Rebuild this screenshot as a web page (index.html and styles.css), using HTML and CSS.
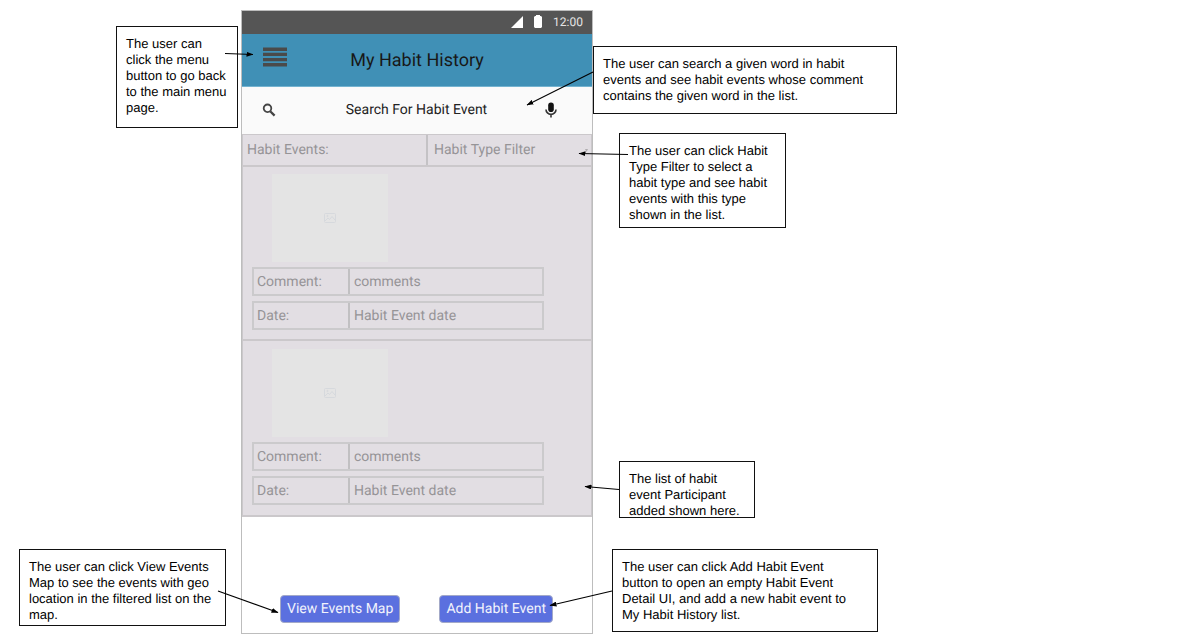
FILE: index.html
```html
<!DOCTYPE html>
<html lang="en">
<head>
<meta charset="utf-8">
<title>My Habit History</title>
<link rel="stylesheet" href="styles.css">
</head>
<body>
<main class="board">
  <section class="phone">
    <div class="status">
      <svg width="12" height="12" viewBox="0 0 12 12"><path d="M12 0v12H0z" fill="#fff"/></svg>
      <svg width="8" height="13" viewBox="0 0 8 13"><path d="M1 1h1V0h4v1h1l1 1v10l-1 1H1l-1-1V2z" fill="#fff"/></svg>
      <span>12:00</span>
    </div>
    <header class="appbar">
      <button class="menu" type="button" aria-label="Menu">
        <svg width="24" height="20" viewBox="0 0 24 20"><path d="M0 2.200h24M0 7.400h24M0 12.600h24M0 17.800h24" stroke="#4a4a4a" stroke-width="3.400"/></svg>
      </button>
      <h1>My Habit History</h1>
    </header>
    <div class="search">
      <svg width="14" height="14" viewBox="0 0 14 14" fill="none" stroke="#444" stroke-width="1.800"><circle cx="5.500" cy="5.300" r="3.800"/><path d="M8.200 8.200l4.400 4.400" stroke-width="2.300"/></svg>
      <input type="text" value="Search For Habit Event" aria-label="Search habit events">
      <button type="button" aria-label="Voice search">
        <svg width="12" height="16" viewBox="0 0 12 16"><rect x="3.200" y="0.500" width="5.600" height="9.500" rx="2.800" fill="#111"/><path d="M1 7.400a5 5 0 0 0 10 0M6 12.200V15.500" fill="none" stroke="#333" stroke-width="1.600"/></svg>
      </button>
    </div>
    <div class="list">
      <div class="filter">
        <label for="type">Habit Events:</label>
        <div class="picker">
          <select id="type"><option>Habit Type Filter</option></select>
          <svg width="3" height="3" viewBox="0 0 3 3"><path d="M0 0h3L1.500 3z" fill="#b0adb0"/></svg>
        </div>
      </div>
      <article class="event">
        <div class="photo"><svg width="12" height="10" viewBox="0 0 12 10" fill="none" stroke="#d6d9dd"><rect x=".5" y=".5" width="11" height="9" rx="1"/><path d="M1 8l3-3 1.500 1.500L8 3.500 11 7"/><circle cx="3.500" cy="3" r=".6"/></svg></div>
        <div class="field"><label for="c1">Comment:</label><input id="c1" type="text" value="comments"></div>
        <div class="field"><label for="d1">Date:</label><input id="d1" type="text" value="Habit Event date"></div>
      </article>
      <article class="event">
        <div class="photo"><svg width="12" height="10" viewBox="0 0 12 10" fill="none" stroke="#d6d9dd"><rect x=".5" y=".5" width="11" height="9" rx="1"/><path d="M1 8l3-3 1.500 1.500L8 3.500 11 7"/><circle cx="3.500" cy="3" r=".6"/></svg></div>
        <div class="field"><label for="c2">Comment:</label><input id="c2" type="text" value="comments"></div>
        <div class="field"><label for="d2">Date:</label><input id="d2" type="text" value="Habit Event date"></div>
      </article>
    </div>
    <footer class="actions">
      <button type="button">View Events Map</button>
      <button type="button">Add Habit Event</button>
    </footer>
  </section>

  <p class="note note-menu">The user can<br>click the menu<br>button to go back<br>to the main menu<br>page.</p>
  <p class="note note-search">The user can search a given word in habit<br>events and see habit events whose comment<br>contains the given word in the list.</p>
  <p class="note note-filter">The user can click Habit<br>Type Filter to select a<br>habit type and see habit<br>events with this type<br>shown in the list.</p>
  <p class="note note-list">The list of habit<br>event Participant<br>added shown here.</p>
  <p class="note note-map">The user can click View Events<br>Map to see the events with geo<br>location in the filtered list on the<br>map.</p>
  <p class="note note-add">The user can click Add Habit Event<br>button to open an empty Habit Event<br>Detail UI, and add a new habit event to<br>My Habit History list.</p>

  <svg class="arrows" width="900" height="640" viewBox="0 0 900 640" aria-hidden="true">
    <defs><marker id="tip" viewBox="0 0 7 5" refX="6.500" refY="2.500" markerWidth="7" markerHeight="5" markerUnits="userSpaceOnUse" orient="auto"><path d="M0 0L7 2.500 0 5z"/></marker></defs>
    <g stroke="#000" stroke-width="1.200" fill="none">
      <path d="M225 53.500L253 54.500" marker-end="url(#tip)"/>
      <path d="M593 72L527 105" marker-end="url(#tip)"/>
      <path d="M628 154.500L579 153.500" marker-end="url(#tip)"/>
      <path d="M619 489.500L585 486.500" marker-end="url(#tip)"/>
      <path d="M218 591L278 612.500" marker-end="url(#tip)"/>
      <path d="M612 591L550 605.500" marker-end="url(#tip)"/>
    </g>
  </svg>
</main>
</body>
</html>
```
FILE: styles.css
```css
* { box-sizing: border-box; }
body { margin: 0; background: #fff; font-family: Roboto, "Liberation Sans", sans-serif; text-rendering: geometricPrecision; }
button, input, select { font: inherit; color: inherit; background: none; border: 0; border-radius: 0; margin: 0; padding: 0; text-rendering: inherit; }
svg { display: block; }

.board { position: relative; padding: 10px 0 10px 241px; }
.phone { width: 352px; border: 1px solid #bdbdbd; background: #fff; }

.status { display: flex; align-items: center; justify-content: flex-end; gap: 11px; height: 23px; padding: 0 9px 2px 0; background: #555; color: #e4e4e4; font-size: 12px; }

.appbar { display: grid; grid-template-columns: 24px 1fr 24px; align-items: center; height: 53px; padding: 0 21px; background: #4090b6; border-bottom: 1px solid #74b3d0; }
.menu { align-self: start; margin-top: 13px; }
.appbar h1 { margin: 0; font-size: 18px; font-weight: 400; text-align: center; color: #181818; }

.search { display: flex; align-items: center; height: 47px; padding: 0 35px 1px 20px; background: #fafafa; color: #222; font-size: 14px; }
.search input { flex: 1; min-width: 0; padding-left: 12px; text-align: center; }

.list { border: 2px solid #cbc8cb; border-width: 1px 1px 2px; background: #e2dee3; color: #969497; font-size: 14px; }
.filter { display: grid; grid-template-columns: 185px 1fr; height: 32px; border-bottom: 2px solid #cbc8cb; }
.filter label { display: flex; align-items: center; padding-left: 4px; border-right: 2px solid #c4c2c5; }
.picker { display: flex; align-items: center; padding-right: 3px; }
.picker select { flex: 1; height: 100%; appearance: none; padding-left: 6px; }

.event { display: flex; flex-direction: column; gap: 5px; padding: 7px 47px 9px 9px; }
.event + .event { padding: 8px 47px 10px 9px; border-top: 2px solid #cbc8cb; }
.photo { display: grid; place-items: center; width: 116px; height: 88px; margin-left: 20px; background: #e4e4e4; }
.field { display: grid; grid-template-columns: 96px 1fr; height: 29px; border: 2px solid #cbcacc; }
.field label { display: flex; align-items: center; padding-left: 3px; border-right: 2px solid #c1c0c2; }
.field input { min-width: 0; padding-left: 4px; }

.actions { display: flex; justify-content: space-between; padding: 78px 39px 10px 38px; }
.actions button { height: 28px; padding: 0 6px; background: #5b70df; border: 1px solid #a3a9c8; border-radius: 4px; color: #f2f3fc; font-size: 14px; }

/* Callouts pinned around the phone */
.note { position: absolute; margin: 0; padding: 9px 0 0 9px; border: 1px solid #111; background: #fff; color: #000; font: 13px/16px "Liberation Sans", Arial, sans-serif; white-space: nowrap; }
.note-menu { left: 116px; top: 26px; width: 122px; height: 102px; }
.note-search { left: 593px; top: 46px; width: 304px; height: 68px; }
.note-filter { left: 619px; top: 133px; width: 167px; height: 95px; }
.note-list { left: 619px; top: 461px; width: 136px; height: 57px; }
.note-map { left: 19px; top: 549px; width: 207px; height: 77px; }
.note-add { left: 612px; top: 549px; width: 266px; height: 83px; }
.arrows { position: absolute; left: 0; top: 0; pointer-events: none; }
```
